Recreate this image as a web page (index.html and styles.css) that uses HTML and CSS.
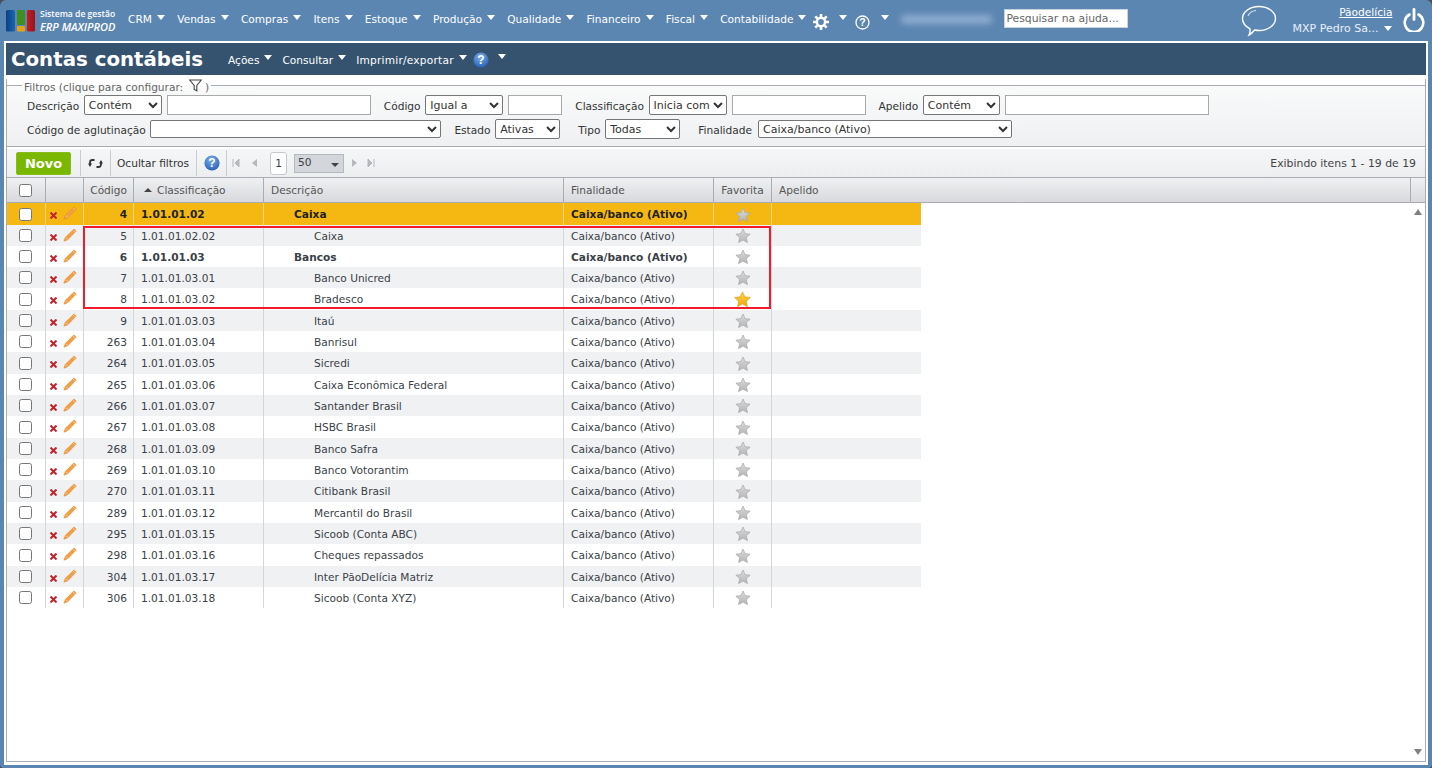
FILE: index.html
```html
<!DOCTYPE html>
<html lang="pt-BR">
<head>
<meta charset="utf-8">
<title>Contas contábeis</title>
<link rel="stylesheet" href="styles.css">
</head>
<body>
<svg class="defs" width="0" height="0" aria-hidden="true">
  <defs>
    <linearGradient id="gstar" x1="0" y1="0" x2="0" y2="1"><stop offset="0" stop-color="#dcdcdc"/><stop offset="1" stop-color="#b4b4b4"/></linearGradient>
    <linearGradient id="ygstar" x1="0" y1="0" x2="0" y2="1"><stop offset="0" stop-color="#ffd84a"/><stop offset="1" stop-color="#eea50c"/></linearGradient>
    <radialGradient id="ghelp" cx="0.45" cy="0.3" r="0.8"><stop offset="0" stop-color="#7fb0ea"/><stop offset="1" stop-color="#1d56ae"/></radialGradient>
    <linearGradient id="gblue" x1="0" y1="0" x2="1" y2="0"><stop offset="0" stop-color="#0b4182"/><stop offset="1" stop-color="#1a66b3"/></linearGradient>
    <linearGradient id="gred" x1="0" y1="0" x2="1" y2="0"><stop offset="0" stop-color="#c51d22"/><stop offset="1" stop-color="#9a1418"/></linearGradient>
    <symbol id="star" viewBox="0 0 16 16"><path d="M8 1l2.100 4.600 5 .6-3.700 3.400 1 5L8 12.100l-4.400 2.500 1-5L.9 6.200l5-.6z" fill="url(#gstar)" stroke="#a8a8a8" stroke-width=".7"/></symbol>
    <symbol id="star-on" viewBox="0 0 16 16"><path d="M8 .8l2.200 4.700 5.200.6-3.800 3.500 1 5.100L8 12.200l-4.600 2.500 1-5.100L.6 6.100l5.200-.6z" fill="url(#ygstar)" stroke="#d99a12" stroke-width=".6"/></symbol>
    <symbol id="del" viewBox="0 0 7 7"><path d="M1.200 1.200l4.600 4.600M5.800 1.200L1.200 5.800" stroke="#c3242b" stroke-width="2" stroke-linecap="square"/></symbol>
    <symbol id="pen" viewBox="0 0 14 14"><path d="M11 .9l2.200 2.100-8.400 8.700-3.900 1.500 1.500-3.900z" fill="#f1a04a" stroke="#e58a2b" stroke-width=".6"/><path d="M3 9.800l1.400 1.400" stroke="#fbd9a8" stroke-width="1"/><path d="M10.200 2.200l1.800 1.800" stroke="#f9c88c" stroke-width="1"/></symbol>
    <symbol id="qhelp" viewBox="0 0 16 16"><circle cx="8" cy="8" r="7.600" fill="url(#ghelp)"/><text x="8" y="12.200" text-anchor="middle" font-family="Liberation Sans" font-weight="700" font-size="12" fill="#fff">?</text></symbol>
  </defs>
</svg>
<div class="shell">
  <header class="topbar">
    <div class="logo">
      <svg width="30" height="23" viewBox="0 0 30 23"><rect x="0" y="1" width="9" height="21.500" rx="1.500" fill="url(#gblue)"/><rect x="11" y="1" width="8" height="15" rx="1" fill="#3f8f1f"/><rect x="11" y="17" width="8" height="5.500" rx="1" fill="#e2a21a"/><rect x="21" y="1" width="8" height="21.500" rx="1.500" fill="url(#gred)"/></svg>
      <div class="logo-text"><span class="logo-small">Sistema de gestão</span><span class="logo-big">ERP MAXIPROD</span></div>
    </div>
    <nav class="menu">
      <span class="mi">CRM<i class="caret"></i></span>
      <span class="mi">Vendas<i class="caret"></i></span>
      <span class="mi">Compras<i class="caret"></i></span>
      <span class="mi">Itens<i class="caret"></i></span>
      <span class="mi">Estoque<i class="caret"></i></span>
      <span class="mi">Produção<i class="caret"></i></span>
      <span class="mi">Qualidade<i class="caret"></i></span>
      <span class="mi">Financeiro<i class="caret"></i></span>
      <span class="mi">Fiscal<i class="caret"></i></span>
      <span class="mi mi-last">Contabilidade<i class="caret"></i></span>
    </nav>
    <svg class="gear" width="16" height="16" viewBox="0 0 16 16"><g stroke="#fff" stroke-width="2.600"><path d="M8 0v16M0 8h16M2.300 2.300l11.400 11.400M13.700 2.300L2.300 13.700"/></g><circle cx="8" cy="8" r="4.200" fill="none" stroke="#fff" stroke-width="2.400"/><circle cx="8" cy="8" r="2.900" fill="#5c86b2"/></svg>
    <i class="caret caret-gear"></i>
    <svg class="qmark" width="15" height="15" viewBox="0 0 15 15"><circle cx="7.500" cy="7.500" r="6.500" fill="none" stroke="#fff" stroke-width="1.300"/><text x="7.500" y="11.300" text-anchor="middle" font-family="Liberation Sans" font-weight="700" font-size="10.500" fill="#fff">?</text></svg>
    <i class="caret caret-q"></i>
    <div class="blurred"></div>
    <input class="search" type="text" placeholder="Pesquisar na ajuda...">
    <svg class="chat" width="36" height="32" viewBox="0 0 36 32"><path d="M18 1.500c9 0 16.500 5.300 16.500 12S27 25.500 18 25.500c-1.500 0-3-.2-4.400-.5-1.500 2-3.500 4-5.600 5 1-2 1.300-4 1-6.200C4.700 21.600 1.500 17.800 1.500 13.500c0-6.700 7.500-12 16.500-12z" fill="none" stroke="#fff" stroke-width="1.400"/><path d="M7 11c1-3 4-5 8-5.500" fill="none" stroke="#cfe0f0" stroke-width="1.200"/></svg>
    <div class="account">
      <a class="company">Pãodelícia</a>
      <span class="user">MXP Pedro Sa...<i class="caret"></i></span>
    </div>
    <svg class="power" width="22" height="24" viewBox="0 0 22 24"><path d="M6.500 6.500a9.300 9.300 0 1 0 9 0" fill="none" stroke="#fff" stroke-width="2.600" stroke-linecap="round"/><path d="M11 1.500v10" stroke="#fff" stroke-width="2.800" stroke-linecap="round"/></svg>
  </header>

  <main class="page">
    <div class="titlebar">
      <h1>Contas contábeis</h1>
      <span class="tm">Ações<i class="caret"></i></span>
      <span class="tm">Consultar<i class="caret"></i></span>
      <span class="tm tm-wide">Imprimir/exportar<i class="caret"></i></span>
      <svg class="t-help" width="16" height="16"><use href="#qhelp"/></svg>
      <i class="caret caret-thelp"></i>
    </div>
    <div class="frame">
      <fieldset class="filters">
        <legend>Filtros (clique para configurar: <svg class="funnel" width="13" height="13" viewBox="0 0 13 13"><path d="M.7 1h11.600L7.800 6.500v5.300L5.200 10.500v-4z" fill="none" stroke="#444" stroke-width="1.100"/></svg> )</legend>
        <div class="frow">
          <label class="l-desc">Descrição</label>
          <select class="w78"><option>Contém</option></select>
          <input class="w204" type="text">
          <label class="l-cod">Código</label>
          <select class="w78"><option>Igual a</option></select>
          <input class="w54" type="text">
          <label class="l-cod">Classificação</label>
          <select class="w78"><option>Inicia com</option></select>
          <input class="w134" type="text">
          <label class="l-cod">Apelido</label>
          <select class="w77"><option>Contém</option></select>
          <input class="w204" type="text">
        </div>
        <div class="frow">
          <label class="l-desc">Código de aglutinação</label>
          <select class="w291 short"><option></option></select>
          <label class="l-cod">Estado</label>
          <select class="w65"><option>Ativas</option></select>
          <label class="l-tipo">Tipo</label>
          <select class="w75"><option>Todas</option></select>
          <label class="l-tipo l-fin">Finalidade</label>
          <select class="w254 short"><option>Caixa/banco (Ativo)</option></select>
        </div>
      </fieldset>

      <div class="toolbar">
        <button class="novo" type="button">Novo</button>
        <span class="sep sep-a"></span>
        <svg class="refresh" width="15" height="13" viewBox="0 0 15 13"><path d="M6.500 3H4.500A2.500 2.500 0 0 0 2 5.500V7M8.500 10h2A2.500 2.500 0 0 0 13 7.500V6" fill="none" stroke="#333" stroke-width="1.800"/><path d="M0 6.500h4L2 10zM11 6.500h4L13 3z" fill="#333"/></svg>
        <span class="sep sep-b"></span>
        <span class="tb-text">Ocultar filtros</span>
        <span class="sep sep-c"></span>
        <svg class="tb-help" width="16" height="16"><use href="#qhelp"/></svg>
        <span class="sep sep-d"></span>
        <svg class="pg pg-first" width="8" height="10" viewBox="0 0 8 10"><path d="M1 1v8M7 1L3 5l4 4z" fill="#b5b8bc" stroke="#b5b8bc"/></svg>
        <svg class="pg pg-prev" width="8" height="10" viewBox="0 0 8 10"><path d="M7 1L2 5l5 4z" fill="#b5b8bc"/></svg>
        <span class="pagebox">1</span>
        <span class="pagesize">50<i class="caret-dark"></i></span>
        <svg class="pg pg-next" width="8" height="10" viewBox="0 0 8 10"><path d="M1 1l5 4-5 4z" fill="#b5b8bc"/></svg>
        <svg class="pg pg-last" width="8" height="10" viewBox="0 0 8 10"><path d="M7 1v8M1 1l4 4-4 4z" fill="#b5b8bc" stroke="#b5b8bc"/></svg>
        <span class="showing">Exibindo itens 1 - 19 de 19</span>
      </div>

      <div class="thead">
        <div class="c c1"><input class="chk" type="checkbox"></div>
        <div class="c c2"></div>
        <div class="c c3 right">Código</div>
        <div class="c c4"><i class="caret-sort"></i>Classificação</div>
        <div class="c c5">Descrição</div>
        <div class="c c6">Finalidade</div>
        <div class="c c7 center">Favorita</div>
        <div class="c c8 grow">Apelido</div>
        <div class="c c9"></div>
      </div>

      <div class="tbody">
        <div class="row sel bold"><div class="c c1"><input class="chk" type="checkbox"></div><div class="c c2"><svg class="i-del"><use href="#del"/></svg><svg class="i-pen"><use href="#pen"/></svg></div><div class="c c3 right">4</div><div class="c c4">1.01.01.02</div><div class="c c5 lvl1">Caixa</div><div class="c c6">Caixa/banco (Ativo)</div><div class="c c7 center"><svg class="i-star"><use href="#star"/></svg></div><div class="c c8"></div></div>
        <div class="row alt"><div class="c c1"><input class="chk" type="checkbox"></div><div class="c c2"><svg class="i-del"><use href="#del"/></svg><svg class="i-pen"><use href="#pen"/></svg></div><div class="c c3 right">5</div><div class="c c4">1.01.01.02.02</div><div class="c c5 lvl2">Caixa</div><div class="c c6">Caixa/banco (Ativo)</div><div class="c c7 center"><svg class="i-star"><use href="#star"/></svg></div><div class="c c8"></div></div>
        <div class="row bold"><div class="c c1"><input class="chk" type="checkbox"></div><div class="c c2"><svg class="i-del"><use href="#del"/></svg><svg class="i-pen"><use href="#pen"/></svg></div><div class="c c3 right">6</div><div class="c c4">1.01.01.03</div><div class="c c5 lvl1">Bancos</div><div class="c c6">Caixa/banco (Ativo)</div><div class="c c7 center"><svg class="i-star"><use href="#star"/></svg></div><div class="c c8"></div></div>
        <div class="row alt"><div class="c c1"><input class="chk" type="checkbox"></div><div class="c c2"><svg class="i-del"><use href="#del"/></svg><svg class="i-pen"><use href="#pen"/></svg></div><div class="c c3 right">7</div><div class="c c4">1.01.01.03.01</div><div class="c c5 lvl2">Banco Unicred</div><div class="c c6">Caixa/banco (Ativo)</div><div class="c c7 center"><svg class="i-star"><use href="#star"/></svg></div><div class="c c8"></div></div>
        <div class="row"><div class="c c1"><input class="chk" type="checkbox"></div><div class="c c2"><svg class="i-del"><use href="#del"/></svg><svg class="i-pen"><use href="#pen"/></svg></div><div class="c c3 right">8</div><div class="c c4">1.01.01.03.02</div><div class="c c5 lvl2">Bradesco</div><div class="c c6">Caixa/banco (Ativo)</div><div class="c c7 center"><svg class="i-star big"><use href="#star-on"/></svg></div><div class="c c8"></div></div>
        <div class="row alt"><div class="c c1"><input class="chk" type="checkbox"></div><div class="c c2"><svg class="i-del"><use href="#del"/></svg><svg class="i-pen"><use href="#pen"/></svg></div><div class="c c3 right">9</div><div class="c c4">1.01.01.03.03</div><div class="c c5 lvl2">Itaú</div><div class="c c6">Caixa/banco (Ativo)</div><div class="c c7 center"><svg class="i-star"><use href="#star"/></svg></div><div class="c c8"></div></div>
        <div class="row"><div class="c c1"><input class="chk" type="checkbox"></div><div class="c c2"><svg class="i-del"><use href="#del"/></svg><svg class="i-pen"><use href="#pen"/></svg></div><div class="c c3 right">263</div><div class="c c4">1.01.01.03.04</div><div class="c c5 lvl2">Banrisul</div><div class="c c6">Caixa/banco (Ativo)</div><div class="c c7 center"><svg class="i-star"><use href="#star"/></svg></div><div class="c c8"></div></div>
        <div class="row alt"><div class="c c1"><input class="chk" type="checkbox"></div><div class="c c2"><svg class="i-del"><use href="#del"/></svg><svg class="i-pen"><use href="#pen"/></svg></div><div class="c c3 right">264</div><div class="c c4">1.01.01.03.05</div><div class="c c5 lvl2">Sicredi</div><div class="c c6">Caixa/banco (Ativo)</div><div class="c c7 center"><svg class="i-star"><use href="#star"/></svg></div><div class="c c8"></div></div>
        <div class="row"><div class="c c1"><input class="chk" type="checkbox"></div><div class="c c2"><svg class="i-del"><use href="#del"/></svg><svg class="i-pen"><use href="#pen"/></svg></div><div class="c c3 right">265</div><div class="c c4">1.01.01.03.06</div><div class="c c5 lvl2">Caixa Econômica Federal</div><div class="c c6">Caixa/banco (Ativo)</div><div class="c c7 center"><svg class="i-star"><use href="#star"/></svg></div><div class="c c8"></div></div>
        <div class="row alt"><div class="c c1"><input class="chk" type="checkbox"></div><div class="c c2"><svg class="i-del"><use href="#del"/></svg><svg class="i-pen"><use href="#pen"/></svg></div><div class="c c3 right">266</div><div class="c c4">1.01.01.03.07</div><div class="c c5 lvl2">Santander Brasil</div><div class="c c6">Caixa/banco (Ativo)</div><div class="c c7 center"><svg class="i-star"><use href="#star"/></svg></div><div class="c c8"></div></div>
        <div class="row"><div class="c c1"><input class="chk" type="checkbox"></div><div class="c c2"><svg class="i-del"><use href="#del"/></svg><svg class="i-pen"><use href="#pen"/></svg></div><div class="c c3 right">267</div><div class="c c4">1.01.01.03.08</div><div class="c c5 lvl2">HSBC Brasil</div><div class="c c6">Caixa/banco (Ativo)</div><div class="c c7 center"><svg class="i-star"><use href="#star"/></svg></div><div class="c c8"></div></div>
        <div class="row alt"><div class="c c1"><input class="chk" type="checkbox"></div><div class="c c2"><svg class="i-del"><use href="#del"/></svg><svg class="i-pen"><use href="#pen"/></svg></div><div class="c c3 right">268</div><div class="c c4">1.01.01.03.09</div><div class="c c5 lvl2">Banco Safra</div><div class="c c6">Caixa/banco (Ativo)</div><div class="c c7 center"><svg class="i-star"><use href="#star"/></svg></div><div class="c c8"></div></div>
        <div class="row"><div class="c c1"><input class="chk" type="checkbox"></div><div class="c c2"><svg class="i-del"><use href="#del"/></svg><svg class="i-pen"><use href="#pen"/></svg></div><div class="c c3 right">269</div><div class="c c4">1.01.01.03.10</div><div class="c c5 lvl2">Banco Votorantim</div><div class="c c6">Caixa/banco (Ativo)</div><div class="c c7 center"><svg class="i-star"><use href="#star"/></svg></div><div class="c c8"></div></div>
        <div class="row alt"><div class="c c1"><input class="chk" type="checkbox"></div><div class="c c2"><svg class="i-del"><use href="#del"/></svg><svg class="i-pen"><use href="#pen"/></svg></div><div class="c c3 right">270</div><div class="c c4">1.01.01.03.11</div><div class="c c5 lvl2">Citibank Brasil</div><div class="c c6">Caixa/banco (Ativo)</div><div class="c c7 center"><svg class="i-star"><use href="#star"/></svg></div><div class="c c8"></div></div>
        <div class="row"><div class="c c1"><input class="chk" type="checkbox"></div><div class="c c2"><svg class="i-del"><use href="#del"/></svg><svg class="i-pen"><use href="#pen"/></svg></div><div class="c c3 right">289</div><div class="c c4">1.01.01.03.12</div><div class="c c5 lvl2">Mercantil do Brasil</div><div class="c c6">Caixa/banco (Ativo)</div><div class="c c7 center"><svg class="i-star"><use href="#star"/></svg></div><div class="c c8"></div></div>
        <div class="row alt"><div class="c c1"><input class="chk" type="checkbox"></div><div class="c c2"><svg class="i-del"><use href="#del"/></svg><svg class="i-pen"><use href="#pen"/></svg></div><div class="c c3 right">295</div><div class="c c4">1.01.01.03.15</div><div class="c c5 lvl2">Sicoob (Conta ABC)</div><div class="c c6">Caixa/banco (Ativo)</div><div class="c c7 center"><svg class="i-star"><use href="#star"/></svg></div><div class="c c8"></div></div>
        <div class="row"><div class="c c1"><input class="chk" type="checkbox"></div><div class="c c2"><svg class="i-del"><use href="#del"/></svg><svg class="i-pen"><use href="#pen"/></svg></div><div class="c c3 right">298</div><div class="c c4">1.01.01.03.16</div><div class="c c5 lvl2">Cheques repassados</div><div class="c c6">Caixa/banco (Ativo)</div><div class="c c7 center"><svg class="i-star"><use href="#star"/></svg></div><div class="c c8"></div></div>
        <div class="row alt"><div class="c c1"><input class="chk" type="checkbox"></div><div class="c c2"><svg class="i-del"><use href="#del"/></svg><svg class="i-pen"><use href="#pen"/></svg></div><div class="c c3 right">304</div><div class="c c4">1.01.01.03.17</div><div class="c c5 lvl2">Inter PãoDelícia Matriz</div><div class="c c6">Caixa/banco (Ativo)</div><div class="c c7 center"><svg class="i-star"><use href="#star"/></svg></div><div class="c c8"></div></div>
        <div class="row"><div class="c c1"><input class="chk" type="checkbox"></div><div class="c c2"><svg class="i-del"><use href="#del"/></svg><svg class="i-pen"><use href="#pen"/></svg></div><div class="c c3 right">306</div><div class="c c4">1.01.01.03.18</div><div class="c c5 lvl2">Sicoob (Conta XYZ)</div><div class="c c6">Caixa/banco (Ativo)</div><div class="c c7 center"><svg class="i-star"><use href="#star"/></svg></div><div class="c c8"></div></div>
        <div class="highlight"></div>
        <i class="sb-up"></i>
        <i class="sb-down"></i>
      </div>
    </div>
  </main>
</div>
</body>
</html>
```
FILE: styles.css
```css
* { box-sizing: border-box; }
html, body { margin: 0; height: 768px; overflow: hidden; background: #4a4f55; }
body, input, select, button {
  font-family: "DejaVu Sans", sans-serif;
  font-size: 10.6px;
  color: #3a3f48;
}
.defs { position: absolute; }
.shell {
  height: 768px;
  background: #5c86b2;
  border-radius: 6px 6px 4px 4px;
  padding: 0 4px 3px;
  display: flex;
  flex-direction: column;
}
/* top bar */
.topbar { height: 41px; flex: none; display: flex; align-items: center; color: #fff; }
.logo { display: flex; align-items: center; margin-left: 2px; width: 122px; flex: none; }
.logo-text { display: flex; flex-direction: column; margin-left: 4px; color: #fff; }
.logo-small { font-family: "Open Sans", sans-serif; font-size: 8.6px; font-weight: 600; line-height: 11px; white-space: nowrap; }
.logo-big { font-family: "Open Sans", sans-serif; font-size: 11px; font-style: italic; font-weight: 600; line-height: 13px; white-space: nowrap; }
.menu { display: flex; flex: none; margin-top: -3px; }
.mi { display: flex; align-items: center; margin-right: 12.3px; color: #fff; white-space: nowrap; }
.mi-last { margin-right: 0; }
.caret {
  display: inline-block;
  width: 0; height: 0; flex: none;
  border-left: 4.5px solid transparent;
  border-right: 4.5px solid transparent;
  border-top: 5px solid #fff;
  margin-left: 5px;
  position: relative;
  top: -2px;
}
.gear { margin: 0 0 -3px 7px; flex: none; }
.caret-gear { margin: -3px 0 0 10px; }
.qmark { margin: 0 0 -3px 8px; flex: none; }
.caret-q { margin: -3px 0 0 11px; }
.blurred {
  width: 91px; height: 9px; margin: -2px 0 0 12px; flex: none;
  background: #8eaccf; border-radius: 4px; filter: blur(3px);
}
.search {
  width: 124px; height: 19px; margin: -4px 0 0 12px; flex: none;
  border: 1px solid #c9d3de; padding: 0 1px; background: #fff; outline: none; font-size: 10.8px;
}
.search::placeholder { color: #666; opacity: 1; }
.chat { margin: 0 0 0 113px; flex: none; }
.account { width: 115px; display: flex; flex-direction: column; align-items: flex-end; flex: none; }
.company { color: #fff; text-decoration: underline; line-height: 14px; margin-bottom: 3px; }
.user { color: #e8f0f8; line-height: 14px; display: flex; align-items: center; font-size: 11px; white-space: nowrap; }
.user .caret { margin-left: 6px; top: -1px; }
.power { margin: -2px 0 0 11px; flex: none; }
/* page */
.page {
  flex: 1; min-height: 0; background: #fff; padding: 2px;
  display: flex; flex-direction: column;
}
.titlebar {
  height: 32px; flex: none; background: #35536f; color: #fff;
  display: flex; align-items: center; padding: 2px 0 0 5px;
}
h1 {
  margin: 0 25px 0 0; font-size: 19.8px; font-weight: 700; color: #fff; line-height: 30px;
  width: 192px; white-space: nowrap;
}
.tm { display: flex; align-items: center; margin-right: 10px; color: #fff; white-space: nowrap; }
.tm .caret { top: -3px; }
.tm-wide { letter-spacing: .22px; }
.t-help { margin: 0 0 0 -4px; flex: none; }
.caret-thelp { margin: -4px 0 0 9px; }
.frame {
  flex: 1; min-height: 0; margin-top: 4px; margin-bottom: 1px;
  border: 1px solid #a9adb3; border-top: 0;
  display: flex; flex-direction: column;
}
.filters {
  height: 68px; flex: none; margin: 0 0 2px -1px; width: 1420px;
  padding: 0 0 0 20px; min-width: 0;
  border: 1px solid #a9adb3;
  background: linear-gradient(#f9fafa, #eef0f2);
  position: relative;
}
legend { padding: 0 2px; margin-left: -5px; color: #666; line-height: 12px; height: 12px; white-space: nowrap; }
.funnel { vertical-align: -1px; margin: 0 0 0 2px; }
.frow { display: flex; align-items: center; height: 20px; margin-top: 4px; }
label { color: #333; white-space: nowrap; margin: 1px 4.7px 0 0; }
.l-cod { margin-left: 13px; }
.l-tipo { margin-left: 18px; }
.l-fin { margin-right: 6px; }
select { height: 20px; padding: 0; background: #fff; border: 1px solid #767676; border-radius: 2px; color: #333; flex: none; font-size: 11px; }
select.short { height: 18px; }
.frow input { height: 20px; border: 1px solid #a9a9a9; background: #fff; margin-left: 5px; flex: none; padding: 0 2px; outline: none; }
.w78 { width: 78px; } .w77 { width: 77px; } .w65 { width: 65px; } .w75 { width: 75px; }
.w291 { width: 291px; } .w254 { width: 254px; }
.frow input.w204 { width: 204px; } .frow input.w54 { width: 54px; } .frow input.w134 { width: 134px; }
/* toolbar */
.toolbar {
  height: 28px; flex: none; display: flex; align-items: center; padding-left: 9px;
  background: linear-gradient(#f5f6f7, #eceef0);
}
.novo {
  width: 55px; height: 23px; background: #7ab800; border: 1px solid #86bd1a; border-radius: 2px;
  color: #fff; font-weight: 700; font-size: 13px; padding: 0; flex: none;
}
.sep { width: 1px; height: 26px; background: #c9ccd0; flex: none; }
.sep-a { margin-left: 9px; }
.refresh { margin: 0 0 0 7px; flex: none; }
.sep-b { margin-left: 7px; }
.tb-text { margin-left: 6px; color: #333; white-space: nowrap; width: 73px; }
.sep-c { margin-left: 6px; }
.tb-help { margin-left: 7px; flex: none; }
.sep-d { margin-left: 6px; }
.pg { flex: none; }
.pg-first { margin-left: 5px; }
.pg-prev { margin-left: 10px; }
.pagebox {
  width: 17px; height: 23px; margin-left: 12px; background: #fff; border: 1px solid #c5c8cc; border-radius: 3px;
  display: flex; align-items: center; justify-content: center; flex: none;
}
.pagesize {
  width: 50px; height: 19px; margin-left: 7px; background: #d3d6da; border: 1px solid #b5b8bc; padding: 0 0 2px 3px;
  display: flex; align-items: center; position: relative; flex: none;
}
.caret-dark {
  position: absolute; right: 4px; top: 8px; width: 0; height: 0;
  border-left: 4px solid transparent; border-right: 4px solid transparent; border-top: 4px solid #444;
}
.pg-next { margin-left: 7px; }
.pg-last { margin-left: 8px; }
.showing { margin-left: auto; padding-right: 9px; color: #444; font-size: 10.85px; white-space: nowrap; }
/* table */
.thead {
  height: 26px; flex: none; display: flex; color: #555;
  background: linear-gradient(#eff0f2, #d7d9dc);
  border-top: 1px solid #a9adb3; border-bottom: 1px solid #a9adb3;
}
.c { display: flex; align-items: center; height: 100%; flex: none; padding: 0 6px 0 7px; border-right: 1px solid #d4d6d9; white-space: nowrap; overflow: hidden; }
.thead .c { border-right: 1px solid #a9adb3; }
.c1 { width: 39px; justify-content: center; padding: 0 1px 0 0; }
.c2 { width: 38px; padding: 0 0 0 3px; }
.c3 { width: 50px; }
.c4 { width: 130px; }
.c5 { width: 300px; }
.c6 { width: 150px; }
.c7 { width: 58px; padding: 0; }
.c8 { width: 150px; border-right: 0; }
.thead .c8.grow { flex: 1; width: auto; }
.thead .c9 { width: 14px; border-right: 0; }
.right { justify-content: flex-end; }
.center { justify-content: center; }
.caret-sort {
  display: inline-block; width: 0; height: 0; margin: 0 5px 0 3px;
  border-left: 4px solid transparent; border-right: 4px solid transparent; border-bottom: 4px solid #444;
}
.chk {
  appearance: none; width: 13px; height: 13px; margin: 0; background: #fff; flex: none;
  border: 1px solid #777; border-radius: 2.5px;
}
.tbody { flex: 1; min-height: 0; position: relative; background: #fff; }
.row { width: 914px; height: 21px; display: flex; }
.row:first-child, .row:nth-child(3n+5) { height: 22px; }
.row.alt { background: #f0f1f3; }
.row.sel { background: #f5b813; color: #222; }
.row.sel .c { border-right-color: #f9d77f; }
.bold { font-weight: 700; }
.c.lvl1 { padding-left: 30px; }
.c.lvl2 { padding-left: 50px; }
.i-del { width: 7px; height: 7px; margin: 3px 0 0 1px; flex: none; }
.i-pen { width: 14px; height: 14px; margin: -2px 0 0 6px; flex: none; }
.i-star { width: 16px; height: 16px; flex: none; margin-top: 1px; }
.i-star.big { width: 17px; height: 17px; }
.highlight {
  position: absolute; left: 76px; top: 23px; width: 688px; height: 83px;
  border: 2px solid #f01c2c; pointer-events: none;
}
.sb-up, .sb-down { position: absolute; right: 3px; width: 0; height: 0; border-left: 4px solid transparent; border-right: 4px solid transparent; }
.sb-up { top: 6px; border-bottom: 6px solid #808080; }
.sb-down { bottom: 6px; border-top: 6px solid #808080; }
```
